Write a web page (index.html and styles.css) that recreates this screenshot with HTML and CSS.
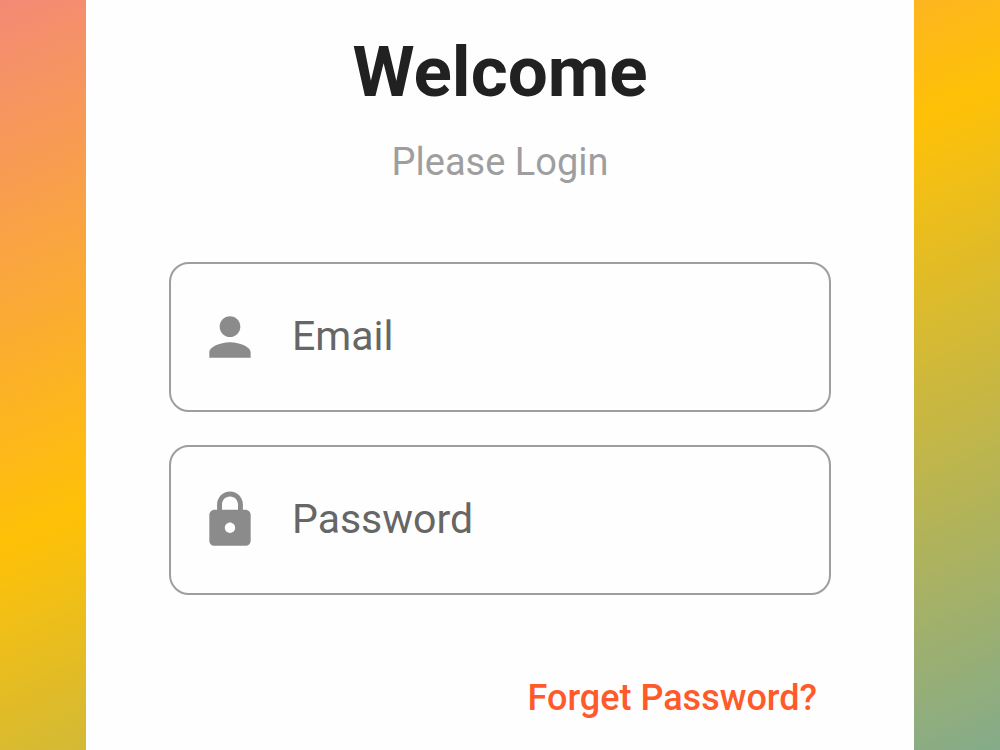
FILE: index.html
```html
<!DOCTYPE html>
<html lang="en">

<head>
    <meta charset="UTF-8">
    <meta name="viewport" content="width=device-width, initial-scale=1.0">
    <title>Login</title>
    <link rel="stylesheet" href="styles.css">
</head>

<body>
    <main class="card">
        <h1>Welcome</h1>
        <p class="subtitle">Please Login</p>

        <form class="login">
            <label class="field" for="email">
                <svg class="icon" viewBox="0 0 24 24" aria-label="Email">
                    <path d="M12 12c2.21 0 4-1.79 4-4s-1.79-4-4-4-4 1.79-4 4 1.79 4 4 4zm0 2c-2.67 0-8 1.34-8 4v2h16v-2c0-2.66-5.33-4-8-4z" />
                </svg>
                <input type="email" id="email" name="email" placeholder="Email">
            </label>
            <label class="field" for="password">
                <svg class="icon" viewBox="0 0 24 24" aria-label="Password">
                    <path d="M18 8h-1V6c0-2.76-2.24-5-5-5S7 3.240 7 6v2H6c-1.100 0-2 .9-2 2v10c0 1.100.9 2 2 2h12c1.100 0 2-.9 2-2V10c0-1.100-.9-2-2-2zm-6 9c-1.100 0-2-.9-2-2s.9-2 2-2 2 .9 2 2-.9 2-2 2zm3.100-9H8.900V6c0-1.710 1.390-3.100 3.100-3.100 1.710 0 3.100 1.390 3.100 3.100v2z" />
                </svg>
                <input type="password" id="password" name="password" placeholder="Password">
            </label>
            <a class="forget" href="#">Forget Password?</a>
        </form>
    </main>
</body>

</html>
```

FILE: styles.css
```css
* {
    margin: 0;
    padding: 0;
    box-sizing: border-box;
}

body {
    min-height: 100vh;
    padding: 0 86px;
    display: flex;
    font-family: Roboto, sans-serif;
    background: linear-gradient(155deg, #f48a76, #ffc107 45%, #84ab8a);
}

.card {
    flex: 1;
    min-width: 0;
    padding: 28px 83px;
    background-color: #fefefe;
}

h1 {
    font-size: 71px;
    line-height: 88px;
    text-align: center;
    color: #212121;
}

.subtitle {
    margin-top: 24px;
    font-size: 38px;
    line-height: 44px;
    text-align: center;
    color: #9e9e9e;
}

.login {
    margin-top: 78px;
    display: flex;
    flex-direction: column;
    gap: 33px;
}

.field {
    height: 150px;
    padding: 0 28px;
    display: flex;
    align-items: center;
    gap: 31px;
    border: 2px solid #9e9e9e;
    border-radius: 20px;
}

.field:focus-within {
    border-color: #ff5722;
}

.icon {
    flex: none;
    width: 62px;
    height: 62px;
    fill: #8b8b8b;
}

input {
    width: 100%;
    min-width: 0;
    padding-bottom: 2px;
    border: none;
    outline: none;
    background: transparent;
    font-family: inherit;
    font-size: 41px;
    line-height: 48px;
    color: #212121;
}

input::placeholder {
    color: #666;
}

.forget {
    align-self: flex-end;
    margin-top: 48px;
    margin-right: 14px;
    font-size: 36px;
    font-weight: 500;
    line-height: 44px;
    color: #ff5a2a;
    text-decoration: none;
}
```
